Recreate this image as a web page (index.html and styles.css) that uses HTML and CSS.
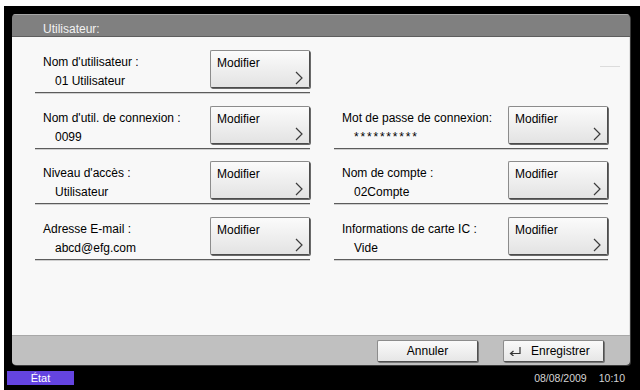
FILE: index.html
```html
<!DOCTYPE html>
<html lang="fr">
<head>
<meta charset="utf-8">
<title>Utilisateur</title>
<link rel="stylesheet" href="styles.css">
</head>
<body>
<div class="screen">
  <div class="panel">
    <div class="titlebar">Utilisateur:</div>
    <div class="content">
      <div class="grid">
        <div class="cell">
          <div class="info"><div class="label">Nom d'utilisateur :</div><div class="value">01 Utilisateur</div></div>
          <button class="btn"><span>Modifier</span><svg class="chev" width="8" height="14" viewBox="0 0 8 14"><path d="M1 1 L7 7 L1 13" /></svg></button>
        </div>
        <div class="cell empty"><span class="dash"></span></div>

        <div class="cell">
          <div class="info"><div class="label">Nom d'util. de connexion :</div><div class="value">0099</div></div>
          <button class="btn"><span>Modifier</span><svg class="chev" width="8" height="14" viewBox="0 0 8 14"><path d="M1 1 L7 7 L1 13" /></svg></button>
        </div>
        <div class="cell">
          <div class="info"><div class="label">Mot de passe de connexion:</div><div class="value stars">**********</div></div>
          <button class="btn"><span>Modifier</span><svg class="chev" width="8" height="14" viewBox="0 0 8 14"><path d="M1 1 L7 7 L1 13" /></svg></button>
        </div>

        <div class="cell">
          <div class="info"><div class="label">Niveau d'accès :</div><div class="value">Utilisateur</div></div>
          <button class="btn"><span>Modifier</span><svg class="chev" width="8" height="14" viewBox="0 0 8 14"><path d="M1 1 L7 7 L1 13" /></svg></button>
        </div>
        <div class="cell">
          <div class="info"><div class="label">Nom de compte :</div><div class="value">02Compte</div></div>
          <button class="btn"><span>Modifier</span><svg class="chev" width="8" height="14" viewBox="0 0 8 14"><path d="M1 1 L7 7 L1 13" /></svg></button>
        </div>

        <div class="cell">
          <div class="info"><div class="label">Adresse E-mail :</div><div class="value">abcd@efg.com</div></div>
          <button class="btn"><span>Modifier</span><svg class="chev" width="8" height="14" viewBox="0 0 8 14"><path d="M1 1 L7 7 L1 13" /></svg></button>
        </div>
        <div class="cell">
          <div class="info"><div class="label">Informations de carte IC :</div><div class="value">Vide</div></div>
          <button class="btn"><span>Modifier</span><svg class="chev" width="8" height="14" viewBox="0 0 8 14"><path d="M1 1 L7 7 L1 13" /></svg></button>
        </div>
      </div>
    </div>
    <div class="footer">
      <button class="fbtn">Annuler</button>
      <button class="fbtn save"><svg class="enter" width="14" height="10" viewBox="0 0 14 10"><path d="M12 1 V7.5 H3" /><path d="M5.5 5 L2.5 7.5 L5.5 10" /></svg><span>Enregistrer</span></button>
    </div>
  </div>
  <div class="status">
    <div class="etat">État</div>
    <div class="clock"><span>08/08/2009</span><span>10:10</span></div>
  </div>
</div>
</body>
</html>
```

FILE: styles.css
```css
html, body {
  margin: 0;
  padding: 0;
  background: #ffffff;
}

body {
  width: 640px;
  height: 390px;
  overflow: hidden;
  font-family: "Liberation Sans", Arial, sans-serif;
  font-size: 12px;
  color: #000;
}

.screen {
  margin: 6px 0 0 4px;
  width: 636px;
  height: 384px;
  background: #000;
  display: flex;
  flex-direction: column;
}

.panel {
  margin: 8px 0 0 8px;
  width: 618px;
  height: 351px;
  display: flex;
  flex-direction: column;
  border-radius: 4px;
  overflow: hidden;
  box-shadow: 1px 1px 0 #3a3a3a;
}

.titlebar {
  height: 23px;
  box-sizing: border-box;
  background: #808080;
  border-top: 1px solid #a6a6a6;
  border-bottom: 1px solid #5e5e5e;
  color: #f2f2f2;
  padding: 7px 0 0 31px;
  line-height: 14px;
  font-size: 12px;
}

.content {
  flex: 1;
  background: #f8f8f8;
  padding: 13px 0 0 23px;
  border-right: 1px solid #e2e2e2;
}

.grid {
  display: grid;
  grid-template-columns: 275px 274px;
  column-gap: 24px;
  row-gap: 12.5px;
}

.cell {
  height: 43px;
  box-sizing: border-box;
  border-bottom: 1px solid #5c5c5c;
  box-shadow: 0 1px 0 #cfcfcf;
  display: flex;
  justify-content: space-between;
  align-items: flex-start;
}

.cell.empty {
  border-bottom: none;
  box-shadow: none;
  justify-content: flex-end;
}

.dash {
  width: 20px;
  height: 1px;
  margin: 16px -12px 0 0;
  background: #dcdcdc;
}

.info {
  padding: 5px 0 0 8px;
  line-height: 15px;
}

.value {
  margin-top: 4px;
  padding-left: 12px;
}

.value.stars {
  letter-spacing: 1.8px;
}

.btn {
  position: relative;
  width: 100px;
  height: 38px;
  box-sizing: border-box;
  margin: 0;
  padding: 5px 0 0 6px;
  border: 1px solid #8c8c8c;
  border-right-color: #4c4c4c;
  border-bottom-color: #4c4c4c;
  border-radius: 2px;
  background: linear-gradient(#fbfbfb, #e3e3e3);
  box-shadow: 1px 1px 0 #6a6a6a;
  font: inherit;
  line-height: 14px;
  color: #000;
  text-align: left;
  display: flex;
  align-items: flex-start;
  justify-content: flex-start;
}

.chev {
  position: absolute;
  right: 6px;
  bottom: 2px;
}

.chev path {
  fill: none;
  stroke: #3c3c3c;
  stroke-width: 1.2;
}

.footer {
  height: 30px;
  box-sizing: border-box;
  background: #c0c0c0;
  border-top: 1px solid #a8a8a8;
  display: flex;
  justify-content: flex-end;
  align-items: center;
  gap: 25px;
  padding-right: 26px;
}

.fbtn {
  width: 101px;
  height: 22px;
  box-sizing: border-box;
  margin: 0;
  padding: 0;
  border: 1px solid #8c8c8c;
  border-right-color: #505050;
  border-bottom-color: #505050;
  border-radius: 2px;
  background: linear-gradient(#fafafa, #e6e6e6);
  box-shadow: 1px 1px 0 #777;
  font: inherit;
  line-height: 14px;
  color: #000;
}

.fbtn.save {
  display: flex;
  align-items: center;
  padding-left: 4px;
  gap: 9px;
}

.enter path {
  fill: none;
  stroke: #333;
  stroke-width: 1.2;
}

.status {
  flex: 1;
  display: flex;
  justify-content: space-between;
  align-items: flex-start;
  padding: 6px 15px 0 3px;
}

.etat {
  width: 67px;
  height: 14px;
  background: #6444e0;
  color: #fff;
  font-size: 11px;
  line-height: 14px;
  text-align: center;
}

.clock {
  display: flex;
  gap: 12px;
  color: #d4d4d4;
  font-size: 10.5px;
  line-height: 14px;
}
```
